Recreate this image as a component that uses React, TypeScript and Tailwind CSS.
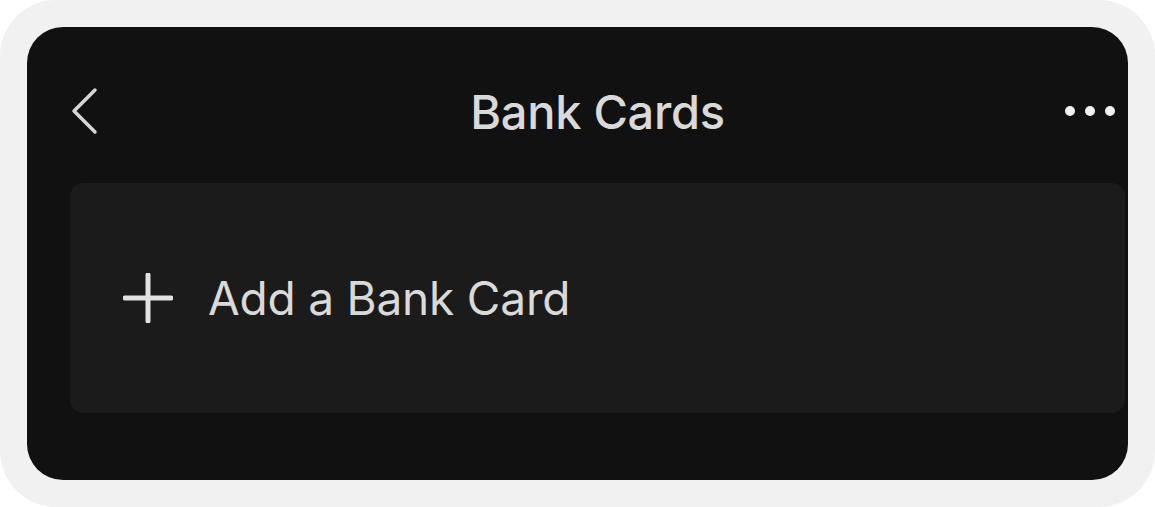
export default function App() {
  return (
    <div className="w-[1155px] h-[507px] bg-white font-['Inter',sans-serif]">
      <div className="w-full h-full bg-[#f1f1f1] rounded-[56px] p-[27px]">
        <div className="w-full h-full bg-[#111111] rounded-[36px] overflow-hidden pt-[59px] pl-[43px] pr-[3px]">
          {/* top bar */}
          <div className="flex items-center h-[50px] pr-[10px]">
            <button className="w-[28px] h-[50px] flex items-center">
              <svg width="28" height="50" viewBox="0 0 28 50" fill="none">
                <polyline
                  points="25,4 4,25 25,46"
                  stroke="#d6d6d6"
                  strokeWidth="3.5"
                  strokeLinecap="round"
                  strokeLinejoin="round"
                />
              </svg>
            </button>
            <div className="flex-1 text-center pl-[32px] text-[47px] font-medium text-[#d9d9d9] tracking-[-0.3px] leading-none">
              Bank Cards
            </div>
            <div className="flex items-center gap-[10px]">
              <span className="w-[10px] h-[10px] rounded-full bg-[#f2f2f2]" />
              <span className="w-[10px] h-[10px] rounded-full bg-[#f2f2f2]" />
              <span className="w-[10px] h-[10px] rounded-full bg-[#f2f2f2]" />
            </div>
          </div>

          {/* add card row */}
          <div className="mt-[47px] h-[230px] bg-[#1b1b1b] rounded-[14px] flex items-center pl-[53px] gap-[35px]">
            <svg width="50" height="50" viewBox="0 0 50 50" fill="none">
              <line x1="25" y1="2" x2="25" y2="48" stroke="#e2e2e2" strokeWidth="5" strokeLinecap="round" />
              <line x1="2" y1="25" x2="48" y2="25" stroke="#e2e2e2" strokeWidth="5" strokeLinecap="round" />
            </svg>
            <span className="text-[46px] text-[#d9d9d9] leading-none tracking-[-0.2px]">Add a Bank Card</span>
          </div>
        </div>
      </div>
    </div>
  );
}
